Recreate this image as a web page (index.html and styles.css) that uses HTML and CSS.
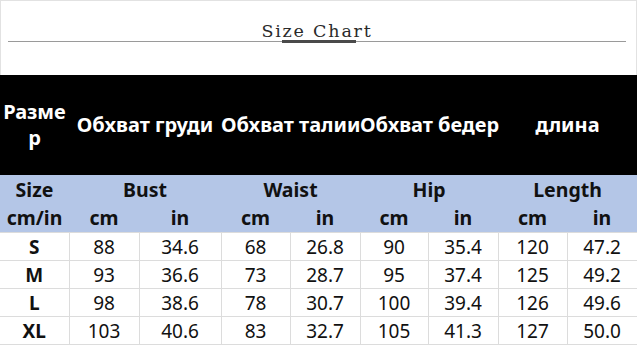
FILE: index.html
```html
<!DOCTYPE html>
<html lang="en">
<head>
    <meta charset="UTF-8">
    <meta name="viewport" content="width=device-width, initial-scale=1.0">
    <title> Size Chart </title>
    <link rel="stylesheet" href="styles.css">
</head>
<body>
    <div class="title-bar">
        <div class="title-rule">
            <span class="title-text">Size Chart</span>
        </div>
        <div class="title-mark"></div>
    </div>

    <table class="size-table">
        <colgroup>
            <col style="width:69px">
            <col style="width:70px">
            <col style="width:82px">
            <col style="width:69px">
            <col style="width:70px">
            <col style="width:68px">
            <col style="width:70px">
            <col style="width:69px">
            <col style="width:70px">
        </colgroup>
        <tr class="ru-head">
            <th>Разме<br>р</th>
            <th colspan="2">Обхват груди</th>
            <th colspan="2">Обхват талии</th>
            <th colspan="2">Обхват бедер</th>
            <th colspan="2">длина</th>
        </tr>
        <tr class="en-head">
            <th>Size</th>
            <th colspan="2">Bust</th>
            <th colspan="2">Waist</th>
            <th colspan="2">Hip</th>
            <th colspan="2">Length</th>
        </tr>
        <tr class="en-head unit-row">
            <th>cm/in</th>
            <th>cm</th><th>in</th>
            <th>cm</th><th>in</th>
            <th>cm</th><th>in</th>
            <th>cm</th><th>in</th>
        </tr>
        <tr class="data-row">
            <th>S</th>
            <td>88</td><td>34.6</td>
            <td>68</td><td>26.8</td>
            <td>90</td><td>35.4</td>
            <td>120</td><td>47.2</td>
        </tr>
        <tr class="data-row">
            <th>M</th>
            <td>93</td><td>36.6</td>
            <td>73</td><td>28.7</td>
            <td>95</td><td>37.4</td>
            <td>125</td><td>49.2</td>
        </tr>
        <tr class="data-row">
            <th>L</th>
            <td>98</td><td>38.6</td>
            <td>78</td><td>30.7</td>
            <td>100</td><td>39.4</td>
            <td>126</td><td>49.6</td>
        </tr>
        <tr class="data-row">
            <th>XL</th>
            <td>103</td><td>40.6</td>
            <td>83</td><td>32.7</td>
            <td>105</td><td>41.3</td>
            <td>127</td><td>50.0</td>
        </tr>
    </table>
</body>
</html>
```

FILE: styles.css
```css
body {
    margin: 0;
    width: 637px;
    background: white;
    font-family: "Noto Sans", "DejaVu Sans", sans-serif;
    color: #111;
}

/* title strip at the top */

.title-bar {
    height: 75px;
    border: 1px solid #e2e2e2;
    border-bottom: none;
    box-sizing: border-box;
    padding-top: 21px;
}
.title-rule {
    margin-left: 7px;
    margin-right: 10px;
    border-bottom: 1px solid #9a9a9a;
    text-align: center;
    line-height: 19px;
}
.title-text {
    font-family: "DejaVu Serif", serif;
    font-size: 17.5px;
    color: #2a2a2a;
    letter-spacing: 1.8px;
}
.title-mark {
    width: 74px;
    height: 3px;
    margin-top: -2px;
    margin-left: 281px;
    background: #4a4a4a;
}

/* the table itself */

.size-table {
    width: 637px;
    table-layout: fixed;
    border-collapse: collapse;
    text-align: center;
}
.size-table th,
.size-table td {
    padding: 0;
}

.ru-head th {
    height: 100px;
    background: black;
    color: white;
    font-size: 20px;
    font-weight: bold;
    line-height: 26px;
    white-space: nowrap;
}

.en-head th {
    height: 29px;
    background: #b4c6e7;
    font-size: 19.5px;
    font-weight: bold;
    line-height: 22px;
}
.unit-row th {
    height: 28px;
}

.data-row th,
.data-row td {
    height: 27px;
    border: 1px solid #dcdcdc;
    font-size: 19px;
    line-height: 22px;
}
.data-row th {
    border-left: none;
    font-weight: bold;
}
.data-row td {
    font-weight: normal;
}
```
